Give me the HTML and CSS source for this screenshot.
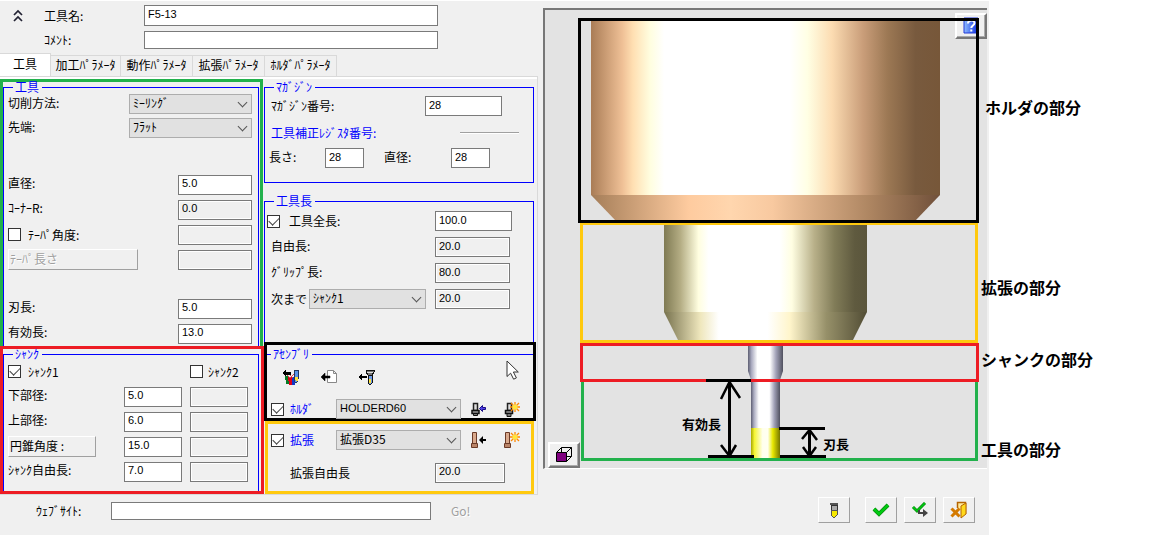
FILE: index.html
```html
<!DOCTYPE html>
<html lang="ja">
<head>
<meta charset="utf-8">
<title>工具</title>
<link rel="stylesheet" href="styles.css">
</head>
<body>
<div class="page">
<main class="window">
  <section class="editor">
    <header class="head">
      <button class="plain collapse" type="button" aria-label="折りたたむ"><svg width="12" height="14" viewBox="0 0 12 14"><path d="M2 6l4-4 4 4M2 12l4-4 4 4" fill="none" stroke="#223" stroke-width="1.7"/></svg></button>
      <label for="name">工具名:</label><input class="name-box" id="name" value="F5-13">
      <label class="row2" for="comment">ｺﾒﾝﾄ:</label><input class="comment-box" id="comment">
    </header>
    <nav class="tabs">
      <button class="tab active" type="button">工具</button><button class="tab" type="button">加工ﾊﾟﾗﾒｰﾀ</button><button class="tab" type="button">動作ﾊﾟﾗﾒｰﾀ</button><button class="tab" type="button">拡張ﾊﾟﾗﾒｰﾀ</button><button class="tab" type="button">ﾎﾙﾀﾞﾊﾟﾗﾒｰﾀ</button>
    </nav>
    <div class="panel">
      <div class="col">
        <div class="frame green">
          <fieldset class="group open">
            <legend>工具</legend>
            <div class="row short"><label for="cut">切削方法:</label><span class="select w-type"><select id="cut"><option>ﾐｰﾘﾝｸﾞ</option></select></span></div>
            <div class="row short"><label for="tip">先端:</label><span class="select w-type"><select id="tip"><option>ﾌﾗｯﾄ</option></select></span></div>
            <div class="row gap-l"><label for="dia">直径:</label><input class="w-m" id="dia" value="5.0"></div>
            <div class="row"><label for="cr">ｺｰﾅｰR:</label><input class="w-m" id="cr" value="0.0" readonly></div>
            <div class="row"><span class="pair"><input type="checkbox" id="taper"><label for="taper">ﾃｰﾊﾟ角度:</label></span><input class="w-m" aria-label="ﾃｰﾊﾟ角度" readonly></div>
            <div class="row"><button class="raised wide" type="button" disabled>ﾃｰﾊﾟ長さ</button><input class="w-m" aria-label="ﾃｰﾊﾟ長さ" readonly></div>
            <div class="row gap-m"><label for="blade">刃長:</label><input class="w-m" id="blade" value="5.0"></div>
            <div class="row"><label for="eff">有効長:</label><input class="w-m" id="eff" value="13.0"></div>
          </fieldset>
        </div>
        <div class="frame red">
          <fieldset class="group open shank">
            <legend>ｼｬﾝｸ</legend>
            <div class="shank-row"><span class="pair"><input type="checkbox" id="s1" checked><label for="s1">ｼｬﾝｸ1</label></span><span></span><span class="pair tight"><input type="checkbox" id="s2"><label for="s2">ｼｬﾝｸ2</label></span></div>
            <div class="shank-row"><label for="low">下部径:</label><input id="low" value="5.0"><input aria-label="下部径 2" readonly></div>
            <div class="shank-row"><label for="up">上部径:</label><input id="up" value="6.0"><input aria-label="上部径 2" readonly></div>
            <div class="shank-row"><button class="raised cone" type="button">円錐角度 :</button><input aria-label="円錐角度" value="15.0"><input aria-label="円錐角度 2" readonly></div>
            <div class="shank-row"><label for="free">ｼｬﾝｸ自由長:</label><input id="free" value="7.0"><input aria-label="ｼｬﾝｸ自由長 2" readonly></div>
          </fieldset>
        </div>
      </div>
      <div class="col right">
        <fieldset class="group magazine">
          <legend>ﾏｶﾞｼﾞﾝ</legend>
          <div class="mag-row"><label for="mag">ﾏｶﾞｼﾞﾝ番号:</label><input class="w-m2" id="mag" value="28"></div>
          <div class="mag-row blue"><span>工具補正ﾚｼﾞｽﾀ番号:</span><span class="rule"></span></div>
          <div class="mag-pair"><label for="len">長さ:</label><input id="len" value="28"><label for="dia2">直径:</label><input id="dia2" value="28"></div>
        </fieldset>
        <fieldset class="group length">
          <legend>工具長</legend>
          <div class="len-row"><span class="pair"><input type="checkbox" id="total" checked><label for="total">工具全長:</label></span><input class="w-m2" aria-label="工具全長" value="100.0"></div>
          <div class="len-row"><label for="fl">自由長:</label><input id="fl" value="20.0" readonly></div>
          <div class="len-row"><label for="grip">ｸﾞﾘｯﾌﾟ長:</label><input id="grip" value="80.0" readonly></div>
          <div class="len-row"><span class="upto"><label for="to">次まで</label><span class="select"><select id="to"><option>ｼｬﾝｸ1</option></select></span></span><input aria-label="次まで" value="20.0" readonly></div>
        </fieldset>
        <div class="frame black">
          <fieldset class="group assembly">
            <legend>ｱｾﾝﾌﾞﾘ</legend>
            <div class="tools">
              <button class="plain" type="button" aria-label="ライブラリ"><svg width="18" height="16" viewBox="0 0 18 16" shape-rendering="crispEdges"><path d="M3 7h4v8H4z" fill="#087b25"/><path d="M6 8h4v8H7z" fill="#e00019"/><path d="M10 8h4l-1 8h-3z" fill="#1237c8"/><path d="M12 1h4v9l-1 3h-2l-1-3z" fill="#5b94e8" stroke="#223860"/><path d="M13 8h3v3l-1 1h-1l-1-1z" fill="#ffe23a"/><path d="M5 6l3 3 4-4M8 6l3 3" fill="none" stroke="#d84850"/><path d="M0 4l4-4v3h5v3H4v2z" fill="#000"/></svg></button>
              <button class="plain" type="button" aria-label="新規"><svg width="18" height="16" viewBox="0 0 18 16"><path d="M7.500 1.500h6l3 3v9h-9zM13.500 1.500v3h3" fill="#fff" stroke="#888"/><path d="M1 8l4-4v3h5v2H5v3z" fill="#000" stroke="#000" stroke-width=".5"/></svg></button>
              <button class="plain" type="button" aria-label="工具読込"><svg width="18" height="16" viewBox="0 0 18 16" shape-rendering="crispEdges"><path d="M8 1h8v2l-2 3h-4L8 3z" fill="#777" stroke="#111"/><path d="M9 3h6" stroke="#ddd"/><path d="M10 6h4v8l-1 1h-2l-1-1z" fill="#719ce9" stroke="#111"/><path d="M11 10h2v4h-2z" fill="#ffe438"/><path d="M0 8l4-4v3h5v2H4v3z" fill="#000"/></svg></button>
            </div>
            <div class="asm-row holder"><input type="checkbox" id="holder" checked><label class="blue" for="holder">ﾎﾙﾀﾞ</label><span class="select latin"><select aria-label="ﾎﾙﾀﾞ"><option>HOLDERD60</option></select></span>
              <button class="plain" type="button" aria-label="ホルダ読込"><svg width="15" height="15" viewBox="0 0 15 15"><path d="M2.500 1.500h4v7h-4z" fill="#ddd" stroke="#222" stroke-width="1.500"/><path d="M1 8.500h7v3H1z" fill="#999" stroke="#111" stroke-width="1.500"/><path d="M2.500 11.500h4v2h-4z" fill="#777" stroke="#111"/><path d="M8.500 6.500l3-3v2h3v2h-3v2z" fill="#5140e8" stroke="#190d85"/></svg></button>
              <button class="plain" type="button" aria-label="ホルダ作成"><svg width="16" height="15" viewBox="0 0 16 15"><path d="M3.500 1.500h4v7h-4z" fill="#ddd" stroke="#222" stroke-width="1.500"/><path d="M1.500 8.500h7v3h-7z" fill="#999" stroke="#111" stroke-width="1.500"/><path d="M3 11.500h4v3H3z" fill="#777" stroke="#111"/><path d="M11 0v10M6 5h10M7 1l8 8M15 1L7 9" stroke="#ff8800" stroke-width="1.300"/><circle cx="11" cy="5" r="2.600" fill="#ffe43e"/></svg></button></div>
          </fieldset>
          <svg class="cursor" width="14" height="21" viewBox="0 0 14 21"><path d="M1 1v15.500l3.600-3.300 3 6 2.800-1.300-3-5.900h4.900z" fill="#fff" stroke="#333"/></svg>
        </div>
        <div class="frame yellow">
          <div class="asm-row ext"><input type="checkbox" id="ext" checked><label class="blue" for="ext">拡張</label><span class="select"><select aria-label="拡張"><option>拡張D35</option></select></span>
            <button class="plain" type="button" aria-label="拡張読込"><svg width="15" height="16" viewBox="0 0 15 16"><path d="M1.500 .5h4v12h-4z" fill="#d9a98c" stroke="#6b3a27"/><path d="M.5 11.500h6v4h-6z" fill="#b98468" stroke="#6b3a27"/><path d="M8 8l4-4v3h3v2h-3v3z" fill="#000"/></svg></button>
            <button class="plain" type="button" aria-label="拡張作成"><svg width="16" height="16" viewBox="0 0 16 16"><path d="M1.500 .5h4v12h-4z" fill="#d9a98c" stroke="#6b3a27"/><path d="M.5 11.500h6v4h-6z" fill="#b98468" stroke="#6b3a27"/><path d="M11 0v10M6 5h10M7 1l8 8M15 1L7 9" stroke="#ff8800" stroke-width="1.300"/><circle cx="11" cy="5" r="2.600" fill="#ffe43e"/></svg></button></div>
          <div class="ext-free"><label for="ef">拡張自由長</label><input id="ef" value="20.0" readonly></div>
        </div>
      </div>
    </div>
    <div class="site"><label for="site">ｳｪﾌﾞｻｲﾄ:</label><input id="site"><button class="plain go" type="button" disabled>Go!</button></div>
  </section>
  <section class="side">
    <div class="preview">
      <button class="corner help" type="button" aria-label="ヘルプ"><svg width="16" height="18" viewBox="0 0 16 18"><defs><linearGradient id="hg"><stop offset="0" stop-color="#8fbcff"/><stop offset="1" stop-color="#0b2be0"/></linearGradient></defs><path d="M1 1h14v15H1z" fill="url(#hg)" stroke="#2038d8"/><path d="M5 6.500c0-4 6.500-4 6.500-.5 0 2.500-3.200 2.500-3.200 5M8.300 12.500v2" fill="none" stroke="#fff" stroke-width="2"/></svg></button>
      <svg class="drawing" viewBox="545 10 442 458" role="img" aria-label="工具プレビュー">
        <defs>
          <linearGradient id="h1"><stop offset="0" stop-color="#a97c56"/><stop offset=".09" stop-color="#efc096"/><stop offset=".12" stop-color="#ffdfb2"/><stop offset=".17" stop-color="#fffee0"/><stop offset=".21" stop-color="#fff"/><stop offset=".57" stop-color="#fff"/><stop offset=".62" stop-color="#ffffe4"/><stop offset=".69" stop-color="#fcdcb2"/><stop offset=".78" stop-color="#c99d79"/><stop offset=".85" stop-color="#9c7854"/><stop offset=".93" stop-color="#785a3e"/><stop offset="1" stop-color="#775739"/></linearGradient>
          <linearGradient id="h2"><stop offset="0" stop-color="#a47d58"/><stop offset=".28" stop-color="#fecb9f"/><stop offset=".4" stop-color="#ffd6ae"/><stop offset=".52" stop-color="#f8c9a0"/><stop offset=".8" stop-color="#ad8561"/><stop offset="1" stop-color="#70503a"/></linearGradient>
          <linearGradient id="e1"><stop offset="0" stop-color="#7f7a53"/><stop offset=".08" stop-color="#b3ac83"/><stop offset=".17" stop-color="#fffee0"/><stop offset=".22" stop-color="#fff"/><stop offset=".57" stop-color="#fff"/><stop offset=".63" stop-color="#fffee2"/><stop offset=".74" stop-color="#b8b089"/><stop offset=".84" stop-color="#817c58"/><stop offset=".94" stop-color="#5f5a3f"/><stop offset="1" stop-color="#5b563c"/></linearGradient>
          <linearGradient id="e2"><stop offset="0" stop-color="#77724e"/><stop offset=".18" stop-color="#efe7bd"/><stop offset=".27" stop-color="#fff"/><stop offset=".51" stop-color="#fff"/><stop offset=".62" stop-color="#fff5cb"/><stop offset=".8" stop-color="#969069"/><stop offset="1" stop-color="#524d35"/></linearGradient>
          <linearGradient id="s1g"><stop offset="0" stop-color="#5d5e72"/><stop offset=".1" stop-color="#a9aabf"/><stop offset=".27" stop-color="#fff"/><stop offset=".63" stop-color="#fff"/><stop offset=".8" stop-color="#a2a2b8"/><stop offset="1" stop-color="#50515f"/></linearGradient>
          <linearGradient id="y1"><stop offset="0" stop-color="#a8a800"/><stop offset=".12" stop-color="#f5f535"/><stop offset=".4" stop-color="#ffffed"/><stop offset=".58" stop-color="#fffff0"/><stop offset=".75" stop-color="#e8e800"/><stop offset="1" stop-color="#767600"/></linearGradient>
        </defs>
        <path d="M591 21H940V195H591z" fill="url(#h1)"/><path d="M591 195H940L915 221H616z" fill="url(#h2)"/>
        <path d="M664 224H867V312H664z" fill="url(#e1)"/><path d="M664 312H867L853 340H678z" fill="url(#e2)"/>
        <path d="M748 345H783V371L780 380H751L748 371z" fill="url(#s1g)"/><path d="M751 380H780V428H751z" fill="url(#s1g)"/><path d="M751 428H780V458H751z" fill="url(#y1)"/>
        <g fill="none" stroke-width="3">
          <path d="M582.500 380V459.500H976.500V380" stroke="#22b14c"/>
          <path d="M581.500 344.500H977.500V380.500H581.500z" stroke="#ed1c24"/>
          <path d="M581.500 223.500H976.500V341.500H581.500z" stroke="#ffc90e"/>
          <path d="M579.500 19.500H977.500V221.500H579.500z" stroke="#000"/>
        </g>
        <path d="M706 380.500H751M708 456.500H754M779 428.500H825M780 456.500H826M729.500 382V458M809.500 430V456" fill="none" stroke="#000" stroke-width="3"/>
        <path d="M721 399L729.500 382 740 398M721 445L729.500 456 736 445M802 439L809.500 430 817 440M803 447L809.500 456 816 447" fill="none" stroke="#000" stroke-width="2.500"/>
        <text class="dim" x="682" y="429">有効長</text><text class="dim" x="823" y="449">刃長</text>
      </svg>
      <button class="corner cube" type="button" aria-label="表示"><svg width="18" height="18" viewBox="0 0 18 18"><path d="M1.500 6.500h10v9h-10z" fill="#800080" stroke="#000"/><path d="M1.500 6.500l5-5h10v9l-5 5M16.500 1.500l-5 5M6.500 1.500v5M11.500 10.500h5" fill="none" stroke="#000"/></svg></button>
    </div>
    <div class="actions">
      <button class="act first" type="button" aria-label="工具"><svg width="10" height="16" viewBox="0 0 10 16" shape-rendering="crispEdges"><path d="M1 1h8v2H1z" fill="#555"/><path d="M2 3h6v6H2z" fill="#aaa" stroke="#333"/><path d="M2 8h6v5l-2 2H4l-2-2z" fill="#f6e900" stroke="#555"/></svg></button>
      <button class="act" type="button" aria-label="OK"><svg width="18" height="14" viewBox="0 0 18 14"><path d="M2 6l5 5 9-9" fill="none" stroke="#078b0c" stroke-width="4"/><path d="M2 6l5 5 9-9" fill="none" stroke="#00ca12" stroke-width="2.500"/></svg></button>
      <button class="act" type="button" aria-label="適用"><svg width="18" height="16" viewBox="0 0 18 16"><path d="M2 5l4 4 8-8" fill="none" stroke="#078b0c" stroke-width="3"/><path d="M2 5l4 4 8-8" fill="none" stroke="#00ca12" stroke-width="1.500"/><path d="M7 8v4h5v3l5-4-5-4v3H9V8z" fill="#444"/></svg></button>
      <button class="act" type="button" aria-label="終了"><svg width="18" height="18" viewBox="0 0 18 18"><path d="M7.500 7V1.500h8V13" fill="#ffeaa0" stroke="#b56400" stroke-width="1.500"/><path d="M11 5l5-3v11l-5 4z" fill="#ffd91b" stroke="#b56400"/><path d="M1.500 7.500l8 8M9.500 7.500l-8 8" stroke="#d47a00" stroke-width="3"/></svg></button>
    </div>
  </section>
</main>
<aside class="notes">
  <p class="n-holder">ホルダの部分</p>
  <p class="n-ext">拡張の部分</p>
  <p class="n-shank">シャンクの部分</p>
  <p class="n-tool">工具の部分</p>
</aside>
</div>
</body>
</html>
```
FILE: styles.css
```css
* { box-sizing: border-box; }
body {
  margin: 0;
  background: #fff;
  color: #000;
  font: 12px/16px "Noto Sans CJK JP", sans-serif;
}
button, select, input { font: inherit; color: inherit; margin: 0; }
svg { display: block; }

.page { display: grid; grid-template-columns: minmax(0, 1fr) 187px; align-items: start; }
.window { display: flex; background: #f0f0f0; box-shadow: inset 0 1px #fff; }
.editor { flex: none; width: 538px; }

input:not([type="checkbox"]) {
  height: 20px;
  min-width: 0;
  padding: 0 3px 3px;
  border: 1px solid #7a7a7a;
  border-radius: 0;
  background: #fff;
  font: 11px/15px "Liberation Sans", "Noto Sans CJK JP", sans-serif;
}
input[readonly]:not([type="checkbox"]) { background: #f0f0f0; box-shadow: inset 0 0 0 1px #fff; }
input[type="checkbox"] {
  appearance: none;
  flex: none;
  width: 13px;
  height: 13px;
  border: 1px solid #333;
  background: #fff;
  display: grid;
  place-items: start center;
}
input[type="checkbox"]:checked::before {
  content: "";
  width: 9px;
  height: 5px;
  margin-top: 1px;
  border: solid #444;
  border-width: 0 0 1px 1px;
  transform: rotate(-45deg);
}
.select { position: relative; display: block; }
.select select {
  appearance: none;
  display: block;
  width: 100%;
  height: 20px;
  padding: 0 20px 2px 3px;
  border: 1px solid #adadad;
  border-radius: 0;
  background: #e1e1e1;
}
.select::after {
  content: "";
  position: absolute;
  right: 6px;
  top: 5px;
  width: 6px;
  height: 6px;
  border: solid #555;
  border-width: 0 1px 1px 0;
  transform: rotate(45deg);
  pointer-events: none;
}
.latin select { font: 11px/15px "Liberation Sans", "Noto Sans CJK JP", sans-serif; }
.plain { padding: 0; border: 0; background: none; }
.blue { color: #00f; }
.pair { display: flex; align-items: center; gap: 7px; }
.pair.tight { gap: 5px; }

.head {
  display: grid;
  grid-template-columns: 32px 100px 294px;
  grid-template-rows: 21px 18px;
  row-gap: 5px;
  align-items: center;
  padding: 5px 0 4px 12px;
}
.head .name-box { height: 21px; padding-bottom: 4px; }
.head .comment-box { height: 18px; }
.row2 { grid-column: 2; }

.tabs { display: flex; align-items: flex-end; height: 23px; }
.tab {
  width: 72px;
  height: 21px;
  padding: 0 0 2px;
  border: 1px solid #d9d9d9;
  border-width: 1px 1px 0 0;
  background: #f0f0f0;
  white-space: nowrap;
}
.tab:nth-child(2) { width: 70px; }
.tab.active { width: 51px; height: 23px; background: #fff; }

.panel {
  display: flex;
  padding-top: 2px;
  border: 1px solid #d9d9d9;
  border-width: 1px 1px 1px 0;
  background: linear-gradient(#fff 2px, #f0f0f0 2px);
}
.col { flex: none; width: 264px; }
.col.right { width: 272px; padding-top: 3px; }
.frame { border: 3px solid; }
.green { width: 263px; border-color: #22b14c; border-bottom: 0; padding-right: 1px; }
.red { border-color: #ed1c24; padding-right: 2px; }
.black { position: relative; border-color: #000; padding-top: 4px; }
.yellow { width: 269px; margin-left: 1px; border-color: #ffc90e; padding-bottom: 2px; }

.group { min-width: 0; margin: 0; padding: 0; border: 1px solid #00f; }
.group.open { border-bottom: 0; }
.group legend {
  margin-left: 9px;
  padding: 0 3px 0 2px;
  color: #00f;
  line-height: 10px;
  height: 10px;
}

.row { display: flex; align-items: center; justify-content: space-between; height: 25px; padding: 0 6px 0 4px; }
.row > label, .shank-row > label, .len-row > label, .mag-pair > label { padding-bottom: 3px; }
.row.short { height: 24px; }
.row.gap-l { margin-top: 32px; }
.row.gap-m { margin-top: 24px; }
.w-type { width: 123px; }
.w-m { width: 74px; }
.w-m2 { width: 77px; }
.raised {
  height: 21px;
  padding: 0 1px 2px;
  border: 1px solid;
  border-color: #fff #a0a0a0 #a0a0a0 #fff;
  background: #f0f0f0;
  text-align: left;
}
.raised:disabled { color: #a0a0a0; text-shadow: 1px 1px #fff; }
.raised.wide { width: 130px; }
.raised.cone { width: 88px; }

.shank { padding-bottom: 7px; }
.shank-row {
  display: grid;
  grid-template-columns: 108px 58px 58px;
  column-gap: 8px;
  align-items: center;
  height: 25px;
  padding-left: 4px;
  white-space: nowrap;
}

.magazine { width: 270px; padding-bottom: 11px; }
.mag-row { display: flex; align-items: center; justify-content: space-between; height: 28px; padding: 0 31px 0 6px; }
.mag-row.blue { height: 25px; padding-right: 14px; }
.rule { width: 59px; height: 2px; border-top: 1px solid #a0a0a0; border-bottom: 1px solid #fff; }
.mag-pair {
  display: grid;
  grid-template-columns: 56px 39px 87px 39px;
  align-items: center;
  height: 26px;
  padding-left: 4px;
}
.mag-pair label + input + label { padding-left: 20px; }

.length { width: 270px; margin-top: 13px; padding: 2px 0 30px; border-bottom: 0; }
.len-row { display: grid; grid-template-columns: 164px 75px; align-items: center; height: 26px; padding-left: 6px; }
.len-row .pair { gap: 9px; margin-left: -4px; }
.upto { display: grid; grid-template-columns: 38px 117px; align-items: center; }

.assembly { border-width: 1px 0 0; }
.assembly legend { margin-left: 4px; }
.tools { display: flex; align-items: center; gap: 20px; height: 36px; padding-left: 15px; }
.asm-row {
  display: grid;
  grid-template-columns: 19px 46px 125px 17px 17px;
  align-items: center;
}
.asm-row button:nth-of-type(1) { margin-left: 10px; }
.asm-row button:nth-of-type(2) { margin-left: 26px; }
.holder { height: 23px; padding: 4px 0 0 4px; }
.ext { height: 32px; padding-left: 3px; }
.ext-free { display: flex; align-items: center; justify-content: space-between; height: 33px; padding: 0 26px 0 22px; }
.ext-free input { width: 70px; }
.cursor { position: absolute; right: 13px; top: 15px; }

.site { display: grid; grid-template-columns: 75px 320px auto; align-items: center; justify-content: start; padding: 7px 0 15px 36px; }
.site input:not([type="checkbox"]) { height: 18px; }
.go { margin-left: 20px; color: #a0a0a0; text-shadow: 1px 1px #fff; }

.side { flex: 1; min-width: 0; padding: 8px 2px 0 5px; }
.preview {
  position: relative;
  border: solid;
  border-width: 2px 0 1px 2px;
  border-color: #777 #fff #fff #777;
  background: #e3e3e3;
}
.drawing { position: relative; width: 100%; height: auto; pointer-events: none; }
.dim { font: bold 13px "Noto Sans CJK JP", sans-serif; }
.corner {
  position: absolute;
  display: grid;
  place-items: center;
  width: 32px;
  height: 26px;
  padding: 0;
  border: 2px solid;
  border-color: #fff #777 #777 #fff;
  background: #f0f0f0;
  box-shadow: inset -1px -1px #aaa;
}
.help { right: 0; top: 3px; }
.cube { left: 3px; bottom: 0; }
.actions { display: flex; justify-content: flex-end; gap: 7px; padding: 28px 12px 12px 0; }
.act {
  display: grid;
  place-items: center;
  width: 32px;
  height: 26px;
  padding: 0;
  border: 1px solid;
  border-color: #fff #a0a0a0 #a0a0a0 #fff;
  background: #f0f0f0;
}
.act.first { margin-right: 8px; }

.notes { position: relative; margin-left: -8px; padding-top: 97px; font-weight: bold; font-size: 16px; line-height: 20px; }
.notes p { margin: 0; }
.n-holder { padding-left: 4px; }
.notes .n-ext { margin-top: 160px; }
.notes .n-shank { margin-top: 52px; }
.notes .n-tool { margin-top: 70px; }
```
